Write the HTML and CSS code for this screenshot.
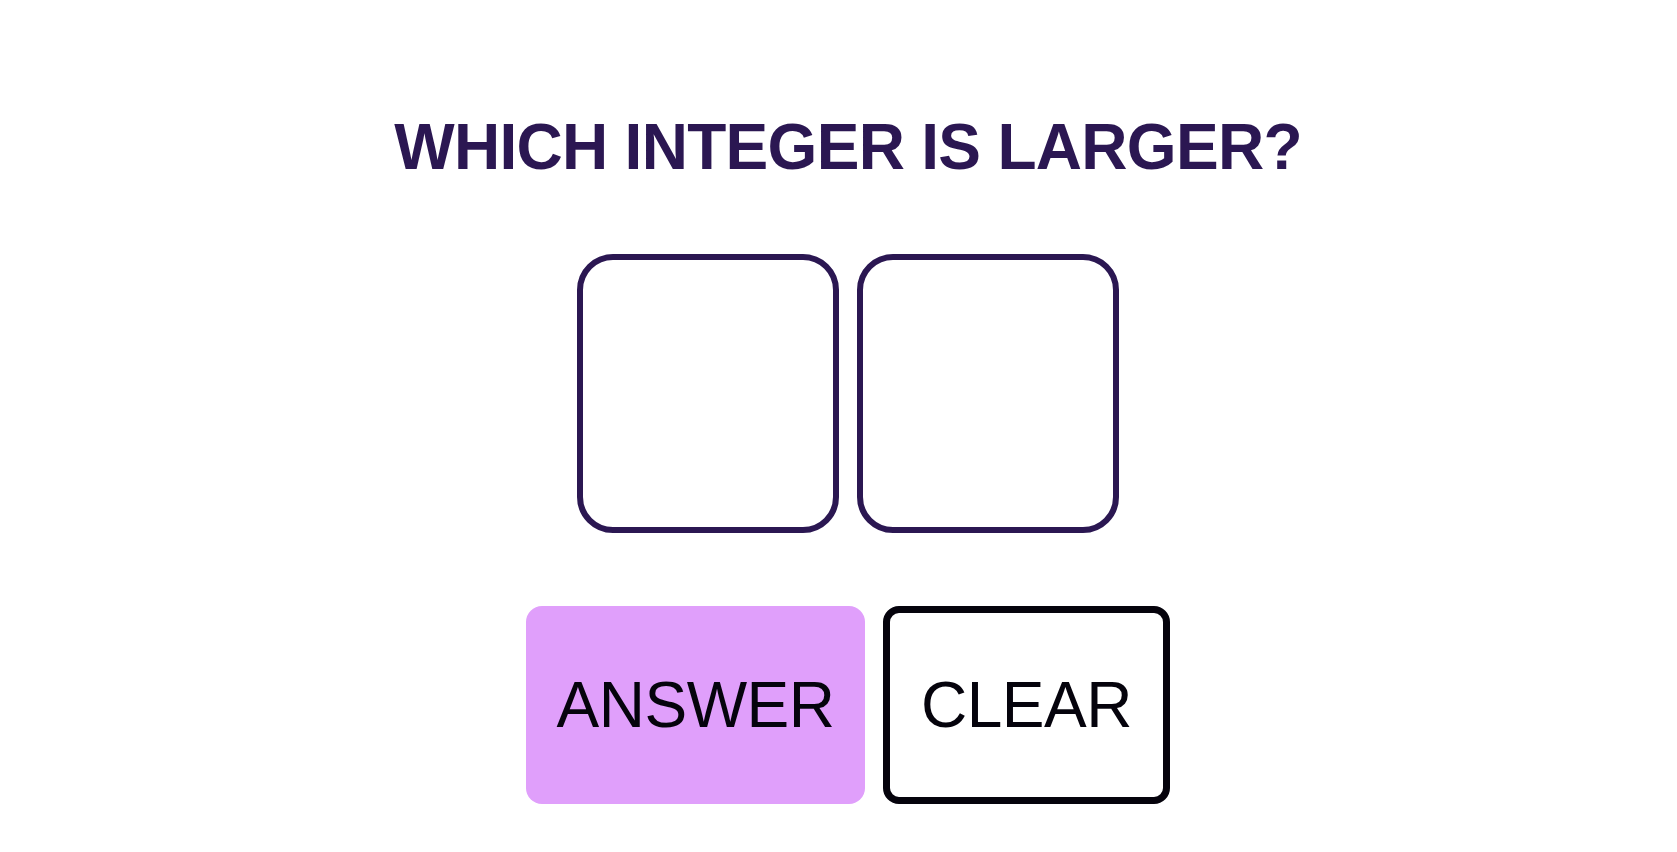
FILE: index.html
```html
<!DOCTYPE html>
<html lang="en">
<head>
<meta charset="utf-8">
<title>Which integer is larger?</title>
<link rel="stylesheet" href="styles.css">
</head>
<body>
<main class="page">
  <h1 class="title">WHICH INTEGER IS LARGER?</h1>
  <div class="choices">
    <div class="choice"></div>
    <div class="choice"></div>
  </div>
  <div class="actions">
    <button class="btn btn-answer" type="button">ANSWER</button>
    <button class="btn btn-clear" type="button">CLEAR</button>
  </div>
</main>
</body>
</html>
```

FILE: styles.css
```css
html, body {
  margin: 0;
  padding: 0;
  background: #ffffff;
}

.page {
  display: flex;
  flex-direction: column;
  align-items: center;
  padding: 110px 0 0 19px;
  font-family: "Liberation Sans", Arial, Helvetica, sans-serif;
}

.title {
  margin: 0;
  font-size: 64px;
  line-height: 74px;
  font-weight: 700;
  letter-spacing: -0.7px;
  color: #2b1752;
  white-space: nowrap;
}

.choices {
  display: flex;
  gap: 18px;
  margin-top: 70px;
}

.choice {
  box-sizing: border-box;
  width: 262px;
  height: 279px;
  border: 6px solid #2b1752;
  border-radius: 36px;
  background: #ffffff;
}

.actions {
  display: flex;
  gap: 18px;
  margin-top: 73px;
}

.btn {
  box-sizing: border-box;
  height: 198px;
  margin: 0;
  font-family: "Liberation Sans", Arial, Helvetica, sans-serif;
  font-size: 64px;
  font-weight: 400;
  letter-spacing: -0.5px;
  color: #05030c;
  cursor: pointer;
}

.btn-answer {
  width: 339px;
  padding: 0;
  border: none;
  border-radius: 16px;
  background: #e09ffb;
}

.btn-clear {
  width: 287px;
  padding: 0;
  border: 7px solid #05030c;
  border-radius: 16px;
  background: #ffffff;
}
```
